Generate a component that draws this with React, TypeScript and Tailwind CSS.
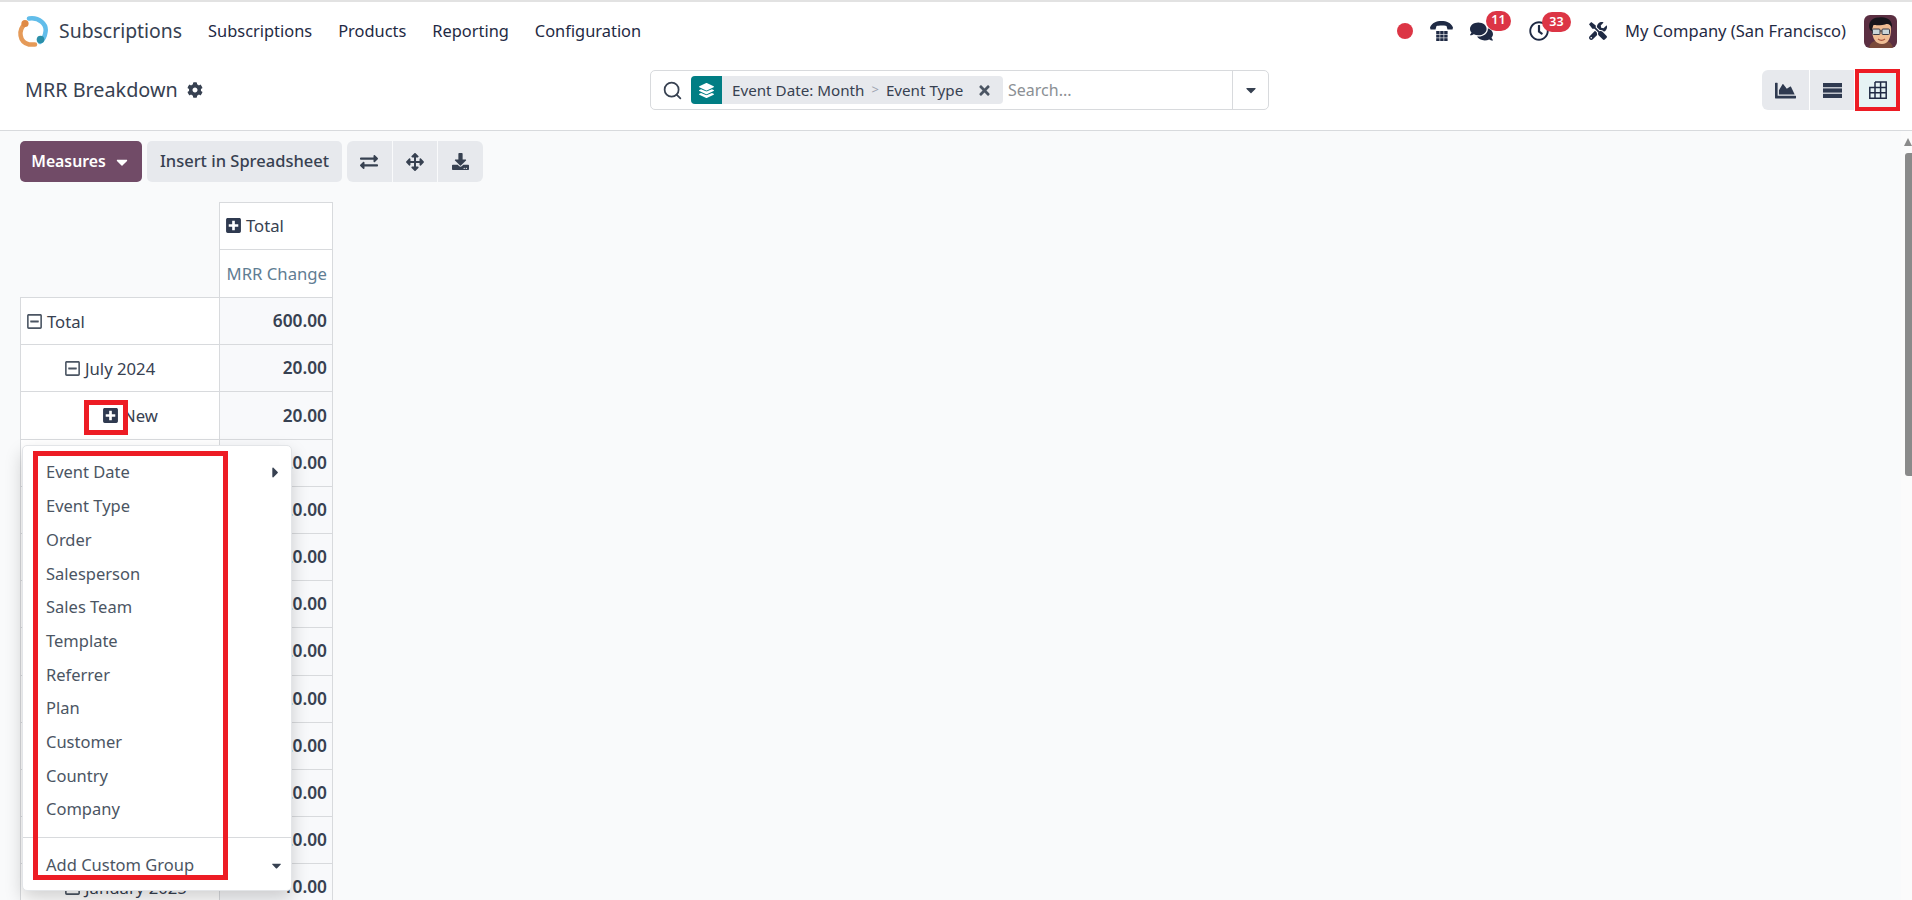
import type { ReactNode } from "react";
import { Search } from "lucide-react";
import {
  FaArrowsAlt,
  FaCaretDown,
  FaCaretRight,
  FaChartArea,
  FaCog,
  FaComments,
  FaDownload,
  FaExchangeAlt,
  FaLayerGroup,
  FaPlusSquare,
  FaRegClock,
  FaRegMinusSquare,
  FaTimes,
  FaTools,
} from "react-icons/fa";

const NAV_ITEMS = ["Subscriptions", "Products", "Reporting", "Configuration"];

const GROUP_ITEMS = [
  "Event Date",
  "Event Type",
  "Order",
  "Salesperson",
  "Sales Team",
  "Template",
  "Referrer",
  "Plan",
  "Customer",
  "Country",
  "Company",
];

type Row = {
  label: string;
  value: string;
  indent: 0 | 1 | 2;
  open: boolean;
};

// rows from the fourth on sit behind the group-by menu, only their values peek out
const HIDDEN_ROWS: Row[] = Array.from({ length: 9 }, () => ({
  label: "",
  value: "20.00",
  indent: 0,
  open: true,
}));

const ROWS: Row[] = [
  { label: "Total", value: "600.00", indent: 0, open: true },
  { label: "July 2024", value: "20.00", indent: 1, open: true },
  { label: "New", value: "20.00", indent: 2, open: false },
  ...HIDDEN_ROWS,
  { label: "January 2025", value: "10.00", indent: 1, open: true },
];

function Logo(): ReactNode {
  return (
    <svg className="h-8 w-8 shrink-0" fill="none" viewBox="0 0 32 32">
      <path
        d="M8 9C1 15 2 27 12 29.5L18 29.5"
        stroke="#e59a58"
        strokeLinecap="round"
        strokeWidth="4.5"
      />
      <circle cx="8" cy="8.5" fill="#df8a45" r="3.6" />
      <path
        d="M12 3.5C22 2 30 9 28.5 17C28 21 26 25 23 27"
        stroke="#62bdea"
        strokeLinecap="round"
        strokeWidth="4.5"
      />
      <circle cx="23.5" cy="24.5" fill="#2b8fa8" r="3.8" />
    </svg>
  );
}

function PhoneIcon(): ReactNode {
  const keys = [0, 1, 2];
  return (
    <svg className="h-[20px] w-[23px]" fill="#1f2a44" viewBox="0 0 23 20">
      <path d="M0 6.5C2 1.5 6.500 0 11.500 0S21 1.500 23 6.500L22.500 8.500L17.500 8.500L16.500 5C14 4.200 9 4.200 6.500 5L5.500 8.500L0.500 8.500Z" />
      {keys.map((row) =>
        keys.map((col) => (
          <rect
            height="3"
            key={`${row}-${col}`}
            width="3.400"
            x={6.2 + col * 4}
            y={10 + row * 3.600}
          />
        ))
      )}
    </svg>
  );
}

function ListIcon(): ReactNode {
  return (
    <svg className="h-[15px] w-[19px]" fill="#2f3a50" viewBox="0 0 19 15">
      <rect height="4.200" width="19" />
      <rect height="4.200" width="19" y="5.400" />
      <rect height="4.200" width="19" y="10.800" />
    </svg>
  );
}

function PivotIcon(): ReactNode {
  return (
    <svg
      className="ml-[2px] h-[18px] w-[18px]"
      fill="none"
      stroke="#1f2a44"
      strokeWidth="1.500"
      viewBox="0 0 18 18"
    >
      <path d="M0.800 6.500H17.200V17.200H0.800ZM6 1H17.200V6.500M6 1V17.200M11.600 1V17.200M0.800 11.800H17.200" />
    </svg>
  );
}

function Avatar(): ReactNode {
  return (
    <svg className="h-[33px] w-[33px] rounded-md" viewBox="0 0 33 33">
      <rect fill="#5b2f42" height="33" width="33" />
      <path d="M5 33C6 27 11 25 17 25S28 27 29 33Z" fill="#7a4a3a" />
      <path d="M8 14C8 24 12 29 18 29S27 23 27 14S22 6 17 6S8 8 8 14Z" fill="#efbd94" />
      <path d="M6 15C3 8 8 2 15 2.500C21 1 29 4 28 13C26 9 24 8.500 21 9.500C16 11 11 9.500 9.500 10C8.500 12 8.500 14 8 16Z" fill="#17161c" />
      <g fill="#c9d4d8" stroke="#3a3b44" strokeWidth="1">
        <rect height="5.500" rx="1" width="7.500" x="8.500" y="14" />
        <rect height="5.500" rx="1" width="7.500" x="18" y="14" />
        <path d="M16 16H18" />
      </g>
      <path d="M14 24C16 25.500 19 25.500 21 24" fill="none" stroke="#a8553f" strokeWidth="1.200" />
    </svg>
  );
}

function Badge({ children, className }: { children: string; className: string }): ReactNode {
  return (
    <span
      className={`absolute flex h-[20px] items-center justify-center rounded-full bg-[#dc3545] text-[12.500px] font-semibold text-white ${className}`}
    >
      {children}
    </span>
  );
}

function Navbar(): ReactNode {
  return (
    <header className="flex h-[58px] shrink-0 items-center bg-white pr-[15px] pl-[17px] text-[#1f2a44]">
      <Logo />
      <span className="ml-[10px] text-[19.400px] text-[#374151]">Subscriptions</span>
      <nav className="ml-[26px] flex gap-[26px] text-[16.400px]">
        {NAV_ITEMS.map((item) => (
          <span key={item}>{item}</span>
        ))}
      </nav>
      <span className="ml-auto h-[16px] w-[16px] rounded-full bg-[#dc3545]" />
      <span className="ml-[17px] flex">
        <PhoneIcon />
      </span>
      <span className="relative ml-[17px] flex">
        <FaComments size={23} />
        <Badge className="top-[-9px] left-[16px] w-[25px]">11</Badge>
      </span>
      <span className="relative ml-[36px] flex">
        <FaRegClock size={20} />
        <Badge className="top-[-9px] left-[13px] w-[29px]">33</Badge>
      </span>
      <span className="ml-[40px] flex">
        <FaTools size={18} />
      </span>
      <span className="ml-[18px] text-[16.500px]">My Company (San Francisco)</span>
      <span className="ml-[18px] flex">
        <Avatar />
      </span>
    </header>
  );
}

function SearchBar(): ReactNode {
  return (
    <div className="flex h-[40px] w-[619px] items-center rounded-[5px] border border-[#d8dadd] bg-white">
      <Search className="ml-[11px] shrink-0 text-[#374151]" size={21} strokeWidth={2} />
      <div className="ml-[8px] flex h-[28px] w-[312px] items-center rounded-[4px] bg-[#e7e9ed] text-[15.200px] text-[#374151]">
        <span className="flex h-full w-[31px] items-center justify-center rounded-l-[4px] bg-[#017e84] text-white">
          <FaLayerGroup size={15} />
        </span>
        <span className="ml-[10px]">Event Date: Month</span>
        <span className="mx-[7px] text-[13px] text-[#9ca3af]">&gt;</span>
        <span>Event Type</span>
        <FaTimes className="ml-[14px] text-[#4b5563]" size={15} />
      </div>
      <span className="ml-[5px] flex-1 text-[16px] text-[#8b8f94]">Search...</span>
      <span className="flex h-full w-[36px] items-center justify-center border-l border-[#d8dadd] text-[#374151]">
        <FaCaretDown size={16} />
      </span>
    </div>
  );
}

function ControlPanel(): ReactNode {
  return (
    <div className="relative flex h-[71px] shrink-0 items-center border-b border-[#d8dadd] bg-white pr-[13px] pb-[10px] pl-[25px]">
      <div className="flex w-[625px] items-center gap-[9px] text-[#374151]">
        <span className="text-[19.800px]">MRR Breakdown</span>
        <FaCog size={16} />
      </div>
      <SearchBar />
      <div className="ml-auto flex h-[40px] gap-px overflow-hidden rounded-l-[6px]">
        <span className="flex w-[47px] items-center justify-center bg-[#e7e9ed] text-[#2f3a50]">
          <FaChartArea size={21} />
        </span>
        <span className="flex w-[44px] items-center justify-center bg-[#e7e9ed]">
          <ListIcon />
        </span>
        <span className="flex w-[44px] items-center justify-center bg-[#e6f3f4]">
          <PivotIcon />
        </span>
      </div>
      {/* red annotation around the pivot button */}
      <span className="absolute top-[9px] right-[12px] h-[42px] w-[45px] border-4 border-[#ed1c24]" />
    </div>
  );
}

function Toolbar(): ReactNode {
  const iconBtn = "flex w-[44.500px] items-center justify-center bg-[#e7e9ed] text-[#374151]";
  return (
    <div className="flex h-[41px] gap-[5px] text-[16.500px]">
      <button
        className="flex w-[122px] items-center justify-center gap-[7px] rounded-[5px] bg-[#714b67] text-[15.800px] font-semibold text-white"
        type="button"
      >
        Measures
        <FaCaretDown size={18} />
      </button>
      <button
        className="w-[195px] rounded-[5px] bg-[#e7e9ed] font-medium text-[#374151]"
        type="button"
      >
        Insert in Spreadsheet
      </button>
      <div className="flex gap-px overflow-hidden rounded-[6px]">
        <span className={iconBtn}>
          <FaExchangeAlt size={18} />
        </span>
        <span className={iconBtn}>
          <FaArrowsAlt size={18} />
        </span>
        <span className={iconBtn}>
          <FaDownload size={17} />
        </span>
      </div>
    </div>
  );
}

function PivotTable(): ReactNode {
  const indents = ["pl-[5px]", "pl-[43px]", "pl-[81px]"];
  return (
    <table className="mt-[20px] w-[312px] table-fixed border-collapse text-[16.700px] text-[#374151]">
      <colgroup>
        <col className="w-[199px]" />
        <col className="w-[113px]" />
      </colgroup>
      <thead>
        <tr className="h-[47px]">
          <th className="border-r border-b border-[#d8dadd]" rowSpan={2} />
          <th className="border border-[#d8dadd] bg-white pl-[5px] text-left font-normal">
            <span className="flex items-center gap-[4px]">
              <FaPlusSquare className="text-[#2f3a50]" size={17} />
              Total
            </span>
          </th>
        </tr>
        <tr className="h-[48px]">
          <th className="border border-[#d8dadd] bg-white pr-[5px] text-right font-normal text-[#5f7d93]">
            MRR Change
          </th>
        </tr>
      </thead>
      <tbody>
        {ROWS.map((row, index) => (
          <tr className="h-[47.200px]" key={`${row.label}-${index}`}>
            <td className={`border border-[#d8dadd] bg-white ${indents[row.indent]}`}>
              {row.label && (
                <span className="flex items-center gap-[4px]">
                  {row.open ? (
                    <FaRegMinusSquare className="text-[#4b5563]" size={17} />
                  ) : (
                    <FaPlusSquare className="text-[#2f3a50]" size={17} />
                  )}
                  {row.label}
                </span>
              )}
            </td>
            <td className="border border-[#d8dadd] bg-[#f8f9fb] pr-[5px] text-right text-[17.300px] font-semibold">
              {row.value}
            </td>
          </tr>
        ))}
      </tbody>
    </table>
  );
}

function GroupMenu(): ReactNode {
  return (
    <div className="absolute top-[445px] left-[22px] h-[446px] w-[270px] rounded-[5px] border border-[#e3e5e8] bg-white pt-[10px] text-[16.500px] text-[#4b5563] shadow-[0_8px_18px_rgba(0,0,0,0.18)]">
      {GROUP_ITEMS.map((item, index) => (
        <div className="flex h-[33.700px] items-center justify-between pr-[7px] pl-[23px]" key={item}>
          {item}
          {index === 0 && <FaCaretRight className="text-[#374151]" size={17} />}
        </div>
      ))}
      <div className="mt-[10px] flex h-[55px] items-center justify-between border-t border-[#d8dadd] pt-[1px] pr-[7px] pl-[23px]">
        Add Custom Group
        <FaCaretDown className="text-[#374151]" size={15} />
      </div>
    </div>
  );
}

export default function App(): ReactNode {
  return (
    <div
      className="relative flex h-[900px] flex-col overflow-hidden bg-[#f9fafb]"
      style={{ fontFamily: '"Noto Sans", sans-serif' }}
    >
      <div className="h-[2px] shrink-0 bg-[#e2e2e2]" />
      <Navbar />
      <ControlPanel />
      <div className="flex min-h-0 flex-1">
        <main className="flex-1 px-[20px] pt-[10px]">
          <Toolbar />
          <PivotTable />
        </main>
        {/* page scrollbar */}
        <div className="flex w-[11px] shrink-0 flex-col items-end bg-[#fbfbfb] pt-[7px]">
          <span className="h-0 w-0 border-r-[4px] border-b-[8px] border-l-[4px] border-r-transparent border-b-[#8a8a8a] border-l-transparent" />
          <span className="mt-[7px] h-[323px] w-[7px] rounded-l-[3px] bg-[#8a8a8a]" />
        </div>
      </div>
      <GroupMenu />
      {/* red annotations from the source screenshot */}
      <span className="absolute top-[400px] left-[84px] h-[35px] w-[44px] border-[5px] border-[#ed1c24]" />
      <span className="absolute top-[451px] left-[33px] h-[429px] w-[195px] border-[5px] border-[#ed1c24]" />
    </div>
  );
}
